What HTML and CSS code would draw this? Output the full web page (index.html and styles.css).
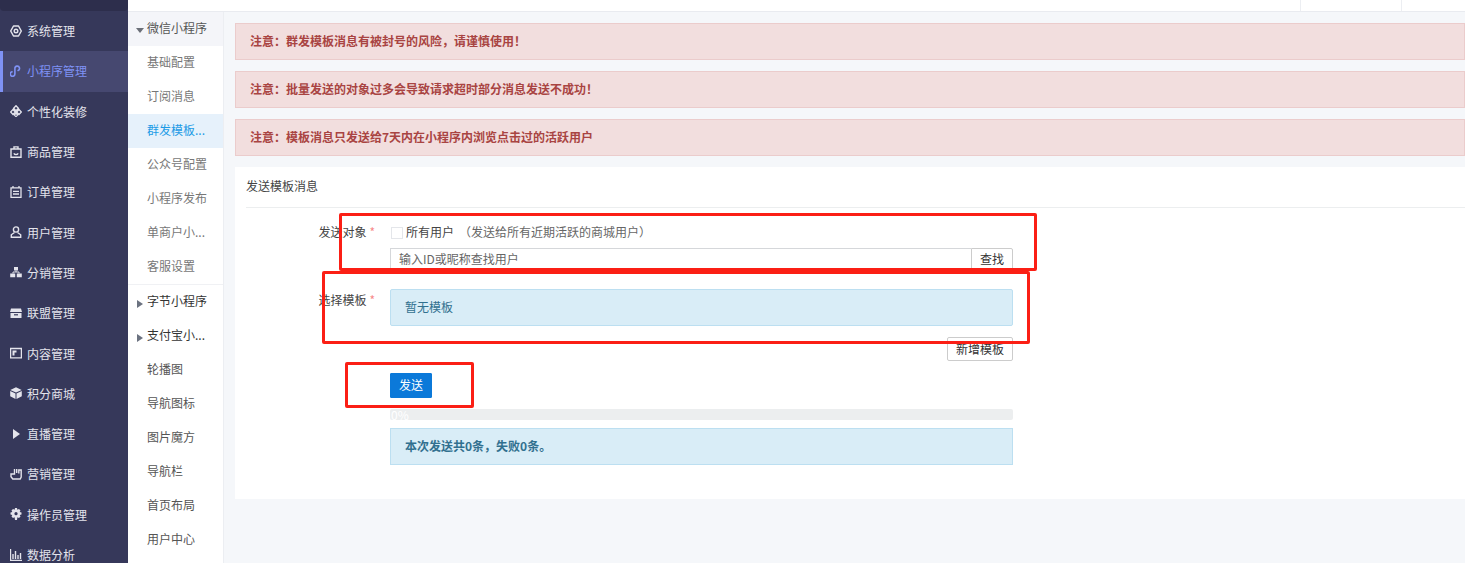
FILE: index.html
```html
<!DOCTYPE html>
<html lang="zh-CN">
<head>
    <meta charset="UTF-8">
    <title>发送模板消息</title>
    <link rel="stylesheet" href="styles.css">
</head>
<body>
    <div class="app">
        <nav class="sidebar">
            <div class="logo-strip"></div>
            <a class="side-item"><svg viewBox="0 0 12 12"><path d="M3.500 1h5L11.300 6 8.500 11h-5L.7 6z" fill="none" stroke="currentColor" stroke-width="1.500" stroke-linejoin="round"/><circle cx="6" cy="6" r="1.800" fill="none" stroke="currentColor" stroke-width="1.400"/></svg>系统管理</a>
            <a class="side-item active"><svg viewBox="0 0 12 12"><path d="M2 6.800a2.300 2.300 0 1 0 2.900 2.200V3.300a2.300 2.300 0 1 1 3.200 2.200" fill="none" stroke="currentColor" stroke-width="1.600" stroke-linecap="round"/></svg>小程序管理</a>
            <a class="side-item"><svg viewBox="0 0 12 12"><path d="M6 .7 8.400 3.200 6 5.700 3.600 3.200zM3 4.500.7 7 3 9.500 5.300 7zM9 4.500 11.300 7 9 9.500 6.700 7zM6 8.200 7.600 10 6 11.600 4.400 10z" fill="none" stroke="currentColor" stroke-width="1.300"/></svg>个性化装修</a>
            <a class="side-item"><svg viewBox="0 0 12 12"><path d="M1 3h10v8.300H1zM4 3V.9h4V3M3.800 7.300c1.100 1.600 3.300 1.600 4.400 0" fill="none" stroke="currentColor" stroke-width="1.400"/></svg>商品管理</a>
            <a class="side-item"><svg viewBox="0 0 12 12"><path d="M1 1.800h10v9.500H1zM3 0v2.500M9 0v2.500M3 5.300h6M3 8h6" fill="none" stroke="currentColor" stroke-width="1.300"/></svg>订单管理</a>
            <a class="side-item"><svg viewBox="0 0 12 12"><circle cx="6" cy="3.500" r="2.600" fill="none" stroke="currentColor" stroke-width="1.400"/><path d="M4.500 6.500 1.300 8.800v2.500h9.400V8.800L7.500 6.500" fill="none" stroke="currentColor" stroke-width="1.400"/></svg>用户管理</a>
            <a class="side-item"><svg viewBox="0 0 12 12"><path d="M4 1h4v3.500H4zM.2 7.500h5v3.800h-5zM6.800 7.500h5v3.800h-5z" fill="currentColor"/><path d="M6 4.500V6M3 7.500V6h6v1.500" fill="none" stroke="currentColor"/></svg>分销管理</a>
            <a class="side-item"><svg viewBox="0 0 12 12"><path d="M1 1.500h10L12 5H0zM.5 6h11v5H.5z" fill="currentColor"/><path d="M4 7.800h4" stroke="#36385a" stroke-width="1.200"/></svg>联盟管理</a>
            <a class="side-item"><svg viewBox="0 0 12 12"><path d="M.6 1.500h10.800v9.300H.6z" fill="none" stroke="currentColor" stroke-width="1.300"/><path d="M2.500 3.500h4v2h-2v3h-2z" fill="currentColor"/></svg>内容管理</a>
            <a class="side-item"><svg viewBox="0 0 12 12"><path d="M6 .3 11.700 3 6 5.600.3 3zM.2 4 5.500 6.500V12L.2 9.200zM11.800 4 6.500 6.500V12l5.300-2.800z" fill="currentColor"/></svg>积分商城</a>
            <a class="side-item"><svg viewBox="0 0 12 12"><path d="M3 1l7 5-7 5z" fill="currentColor"/></svg>直播管理</a>
            <a class="side-item"><svg viewBox="0 0 12 12"><path d="M4.500 1v5H1v2.800L2.800 11h7.400l1-2V2H8.800v3.500M6.700 1v4" fill="none" stroke="currentColor" stroke-width="1.400"/></svg>营销管理</a>
            <a class="side-item"><svg viewBox="0 0 12 12"><path d="M5 0h2l.4 1.700 1.600-.7 1.500 1.500-.8 1.500 1.800.5v2l-1.800.5.8 1.500L9 10l-1.600-.7L7 12H5l-.4-2.700L3 10 1.500 8.500l.8-1.500L.5 6.500v-2l1.800-.5-.8-1.500L3 1l1.600.7z" fill="currentColor"/><circle cx="6" cy="5.700" r="1.600" fill="#36385a"/></svg>操作员管理</a>
            <a class="side-item"><svg viewBox="0 0 12 12"><path d="M.5 0v11.500H12M3 5v5M5.500 2v8M8 6v4M10.500 4v6" fill="none" stroke="currentColor" stroke-width="1.400"/></svg>数据分析</a>
        </nav>
        <div class="right">
            <header class="topbar">
                <div class="topbar-fill"></div>
                <div class="topbar-cell"></div>
                <div class="topbar-end"></div>
            </header>
            <div class="body-row">
                <aside class="subnav">
                    <div class="sub-group open"><i class="caret-down"></i>微信小程序</div>
                    <a class="sub-item">基础配置</a>
                    <a class="sub-item">订阅消息</a>
                    <a class="sub-item current">群发模板...</a>
                    <a class="sub-item">公众号配置</a>
                    <a class="sub-item">小程序发布</a>
                    <a class="sub-item">单商户小...</a>
                    <a class="sub-item last">客服设置</a>
                    <div class="sub-group"><i class="caret-right"></i>字节小程序</div>
                    <div class="sub-group"><i class="caret-right"></i>支付宝小...</div>
                    <a class="sub-item dark">轮播图</a>
                    <a class="sub-item dark">导航图标</a>
                    <a class="sub-item dark">图片魔方</a>
                    <a class="sub-item dark">导航栏</a>
                    <a class="sub-item dark">首页布局</a>
                    <a class="sub-item dark">用户中心</a>
                </aside>
                <main class="content">
                    <div class="alert danger">注意：群发模板消息有被封号的风险，请谨慎使用！</div>
                    <div class="alert danger">注意：批量发送的对象过多会导致请求超时部分消息发送不成功！</div>
                    <div class="alert danger">注意：模板消息只发送给7天内在小程序内浏览点击过的活跃用户</div>
                    <section class="panel">
                        <div class="panel-title">发送模板消息</div>
                        <div class="form-row first">
                            <label class="form-label">发送对象<em>*</em></label>
                            <div class="form-field">
                                <div class="check-line">
                                    <span class="checkbox"></span>所有用户
                                    <span class="hint">（发送给所有近期活跃的商城用户）</span>
                                </div>
                                <div class="search-group">
                                    <input class="search-input" type="text" placeholder="输入ID或昵称查找用户">
                                    <button class="btn search-btn">查找</button>
                                </div>
                            </div>
                        </div>
                        <div class="form-row second">
                            <label class="form-label">选择模板<em>*</em></label>
                            <div class="form-field">
                                <div class="alert info">暂无模板</div>
                                <div class="add-line"><button class="btn">新增模板</button></div>
                            </div>
                        </div>
                        <div class="form-row">
                            <div class="form-label"></div>
                            <div class="form-field">
                                <button class="btn primary">发送</button>
                                <div class="progress">0%</div>
                                <div class="alert info strong">本次发送共0条，失败0条。</div>
                            </div>
                        </div>
                    </section>
                </main>
            </div>
        </div>
    </div>
    <div class="mark mark-a"></div>
    <div class="mark mark-b"></div>
    <div class="mark mark-c"></div>
</body>
</html>
```

FILE: styles.css
```css
* {
    box-sizing: border-box;
}
html, body {
    margin: 0;
    height: 563px;
    overflow: hidden;
}
body {
    position: relative;
    font-family: "Noto Sans CJK SC", "Noto Sans", sans-serif;
    font-size: 12px;
    color: #444;
    background: #f5f7fa;
}
.app {
    display: flex;
    height: 563px;
}
.sidebar {
    width: 128px;
    flex: none;
    background: #36385a;
    overflow: hidden;
}
.logo-strip {
    height: 11px;
    background: #2d2e4c;
    border-radius: 0 0 4px 4px;
}
.side-item {
    display: flex;
    align-items: center;
    gap: 5px;
    height: 40.3px;
    padding: 0 0 1px 10px;
    color: #e4e4ec;
}
.side-item svg {
    width: 12px;
    height: 12px;
    flex: none;
}
.side-item.active {
    background: #464870;
    color: #7f92f5;
    border-left: 3px solid #7f92f5;
    padding-left: 7px;
}
.right {
    flex: 1;
    min-width: 0;
}
.topbar {
    display: flex;
    height: 12px;
    background: #fff;
    border-bottom: 1px solid #e9ebf0;
}
.topbar-fill {
    width: 1172px;
    flex: none;
}
.topbar-cell {
    width: 101px;
    flex: none;
    border-left: 1px solid #eceef2;
}
.topbar-end {
    flex: 1;
    border-left: 1px solid #eceef2;
}
.body-row {
    display: flex;
}
.subnav {
    width: 96px;
    flex: none;
    height: 551px;
    background: #fff;
    border-right: 1px solid #eceef2;
    overflow: hidden;
}
.sub-group, .sub-item {
    display: block;
    height: 34px;
    line-height: 32px;
    padding-left: 19px;
    color: #333;
    position: relative;
    white-space: nowrap;
}
.sub-group.open {
    background: #f4f5f9;
    color: #555;
}
.sub-item {
    color: #777;
}
.sub-item.current {
    background: #e6f1fb;
    color: #1c9be6;
}
.sub-item.last {
    height: 35px;
    border-bottom: 1px solid #f0f1f4;
}
.sub-item.dark {
    color: #555;
}
.caret-down, .caret-right {
    position: absolute;
    width: 0;
    height: 0;
}
.caret-down {
    left: 8px;
    top: 16px;
    border-left: 4px solid transparent;
    border-right: 4px solid transparent;
    border-top: 5px solid #6b6f78;
}
.caret-right {
    left: 9px;
    top: 15px;
    border-top: 4px solid transparent;
    border-bottom: 4px solid transparent;
    border-left: 6px solid #6b7280;
}
.content {
    flex: 1;
    min-width: 0;
    padding: 11px 0 0 11px;
}
.alert {
    height: 37px;
    line-height: 33px;
    padding-left: 14px;
    border: 1px solid;
}
.alert.danger {
    margin-bottom: 11px;
    background: #f2dede;
    border-color: #ebcccc;
    color: #a94442;
    font-weight: 700;
}
.alert.info {
    background: #d9edf7;
    border-color: #bcdff1;
    color: #31708f;
    border-radius: 2px;
}
.alert.strong {
    margin-top: 8px;
    font-weight: 700;
    border-radius: 0;
}
.panel {
    height: 332px;
    background: #fff;
    padding: 0 0 0 11px;
}
.panel-title {
    height: 41px;
    line-height: 37px;
    border-bottom: 1px solid #eceeef;
    color: #444;
}
.form-row {
    display: flex;
}
.form-row.first {
    padding-top: 15px;
    height: 81px;
}
.form-row.second {
    height: 84px;
}
.form-label {
    width: 129px;
    flex: none;
    text-align: right;
    line-height: 18px;
}
.form-row.second .form-label {
    padding-top: 2px;
}
.form-label em {
    font-style: normal;
    color: #f78a8a;
    margin-left: 3px;
}
.form-field {
    width: 623px;
    margin-left: 15px;
    flex: none;
}
.check-line {
    display: flex;
    align-items: center;
    height: 16px;
    margin-bottom: 9px;
}
.checkbox {
    width: 12px;
    height: 12px;
    margin: 3px 3px 0 1px;
    border: 1px solid #e4e6ea;
    background: #fff;
}
.hint {
    margin-left: 5px;
    color: #666;
}
.search-group {
    display: flex;
    height: 22px;
}
.search-input {
    flex: 1;
    min-width: 0;
    height: 22px;
    padding: 0 8px 2px;
    font: inherit;
    color: #555;
    border: 1px solid #d5d7da;
    border-right: 0;
    outline: 0;
}
.search-input::placeholder {
    color: #666;
    opacity: 1;
}
.btn {
    height: 24px;
    padding: 0 8px;
    font: inherit;
    line-height: 20px;
    color: #333;
    background: #fff;
    border: 1px solid #ccc;
    border-radius: 2px;
}
.search-btn {
    width: 42px;
    height: 22px;
    padding-bottom: 2px;
    border-radius: 0 2px 2px 0;
}
.add-line {
    display: flex;
    justify-content: flex-end;
    margin-top: 11px;
}
.btn.primary {
    display: block;
    width: 42px;
    height: 25px;
    padding: 0 0 2px;
    color: #fff;
    background: #0b79d9;
    border-color: #0b79d9;
    border-radius: 1px;
}
.progress {
    height: 11px;
    margin-top: 11px;
    padding-left: 1px;
    line-height: 11px;
    font-size: 12px;
    color: #fff;
    background: #eceeef;
    border-radius: 2px;
}
.mark {
    position: absolute;
    border: 3px solid #fb1f15;
    border-radius: 2px;
}
.mark-a {
    left: 339px;
    top: 213px;
    width: 698px;
    height: 58px;
}
.mark-b {
    left: 322px;
    top: 271px;
    width: 708px;
    height: 73px;
}
.mark-c {
    left: 345px;
    top: 362px;
    width: 129px;
    height: 46px;
}
```
